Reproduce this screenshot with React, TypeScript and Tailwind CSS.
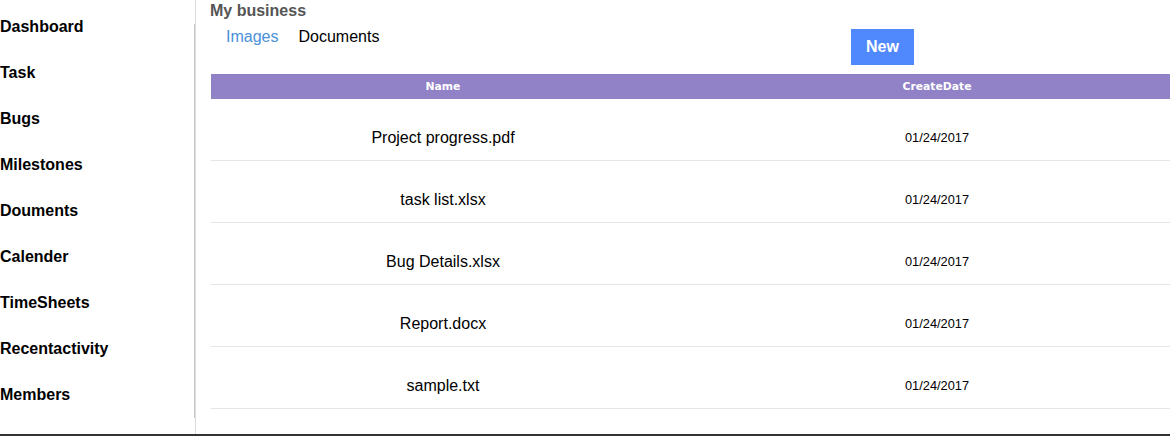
import React from "react";

const navItems = [
  "Dashboard",
  "Task",
  "Bugs",
  "Milestones",
  "Douments",
  "Calender",
  "TimeSheets",
  "Recentactivity",
  "Members",
];

const files = [
  "Project progress.pdf",
  "task list.xlsx",
  "Bug Details.xlsx",
  "Report.docx",
  "sample.txt",
];

export default function App() {
  return (
    <div
      className="w-[1170px] h-[436px] overflow-hidden bg-white text-black border-b-2 border-[#333]"
      style={{ fontFamily: '"Liberation Sans", Arial, sans-serif' }}
    >
      <div className="flex h-[434px]">
        <nav className="w-[194px] shrink-0 pt-[4px]">
          {navItems.map((item) => (
            <div
              key={item}
              className="h-[46px] flex items-center text-[16px] font-bold leading-[18px]"
            >
              {item}
            </div>
          ))}
        </nav>
        <div className="w-px shrink-0 mt-[24px] h-[394px] bg-[#c8c8c8]" />
        <main className="flex-1 min-w-0 overflow-hidden border-l border-[#dcdcdc]">
          <div className="pl-[14px] pt-[1px] h-[20px] flex items-center text-[16px] font-bold text-[#555]">
            My business
          </div>
          <div className="flex h-[54px]">
            <div className="flex gap-[20px] pl-[30px] pt-[7px] text-[16px] leading-[20px] h-fit">
              <span className="text-[#4a90d9]">Images</span>
              <span>Documents</span>
            </div>
            <div className="ml-auto mr-[256px] mt-[9px]">
              <button className="w-[63px] h-[36px] bg-[#5088fd] text-white font-bold text-[16px]">
                New
              </button>
            </div>
          </div>
          <div className="ml-[15px] w-[988px]">
            <div
              className="flex h-[25px] bg-[#9181c7] text-white font-bold text-[10.8px] items-center pt-[1px]"
              style={{ fontFamily: '"DejaVu Sans", Verdana, sans-serif' }}
            >
              <div className="w-[464px] text-center">Name</div>
              <div className="w-[524px] text-center">CreateDate</div>
            </div>
            {files.map((f) => (
              <div
                key={f}
                className="flex h-[62px] pt-[30px] border-b border-[#e6e6e6]"
              >
                <div className="w-[464px] h-[18px] flex items-center justify-center text-[16px]">
                  {f}
                </div>
                <div className="w-[524px] h-[18px] flex items-center justify-center text-[12.8px]">
                  01/24/2017
                </div>
              </div>
            ))}
          </div>
        </main>
      </div>
    </div>
  );
}
